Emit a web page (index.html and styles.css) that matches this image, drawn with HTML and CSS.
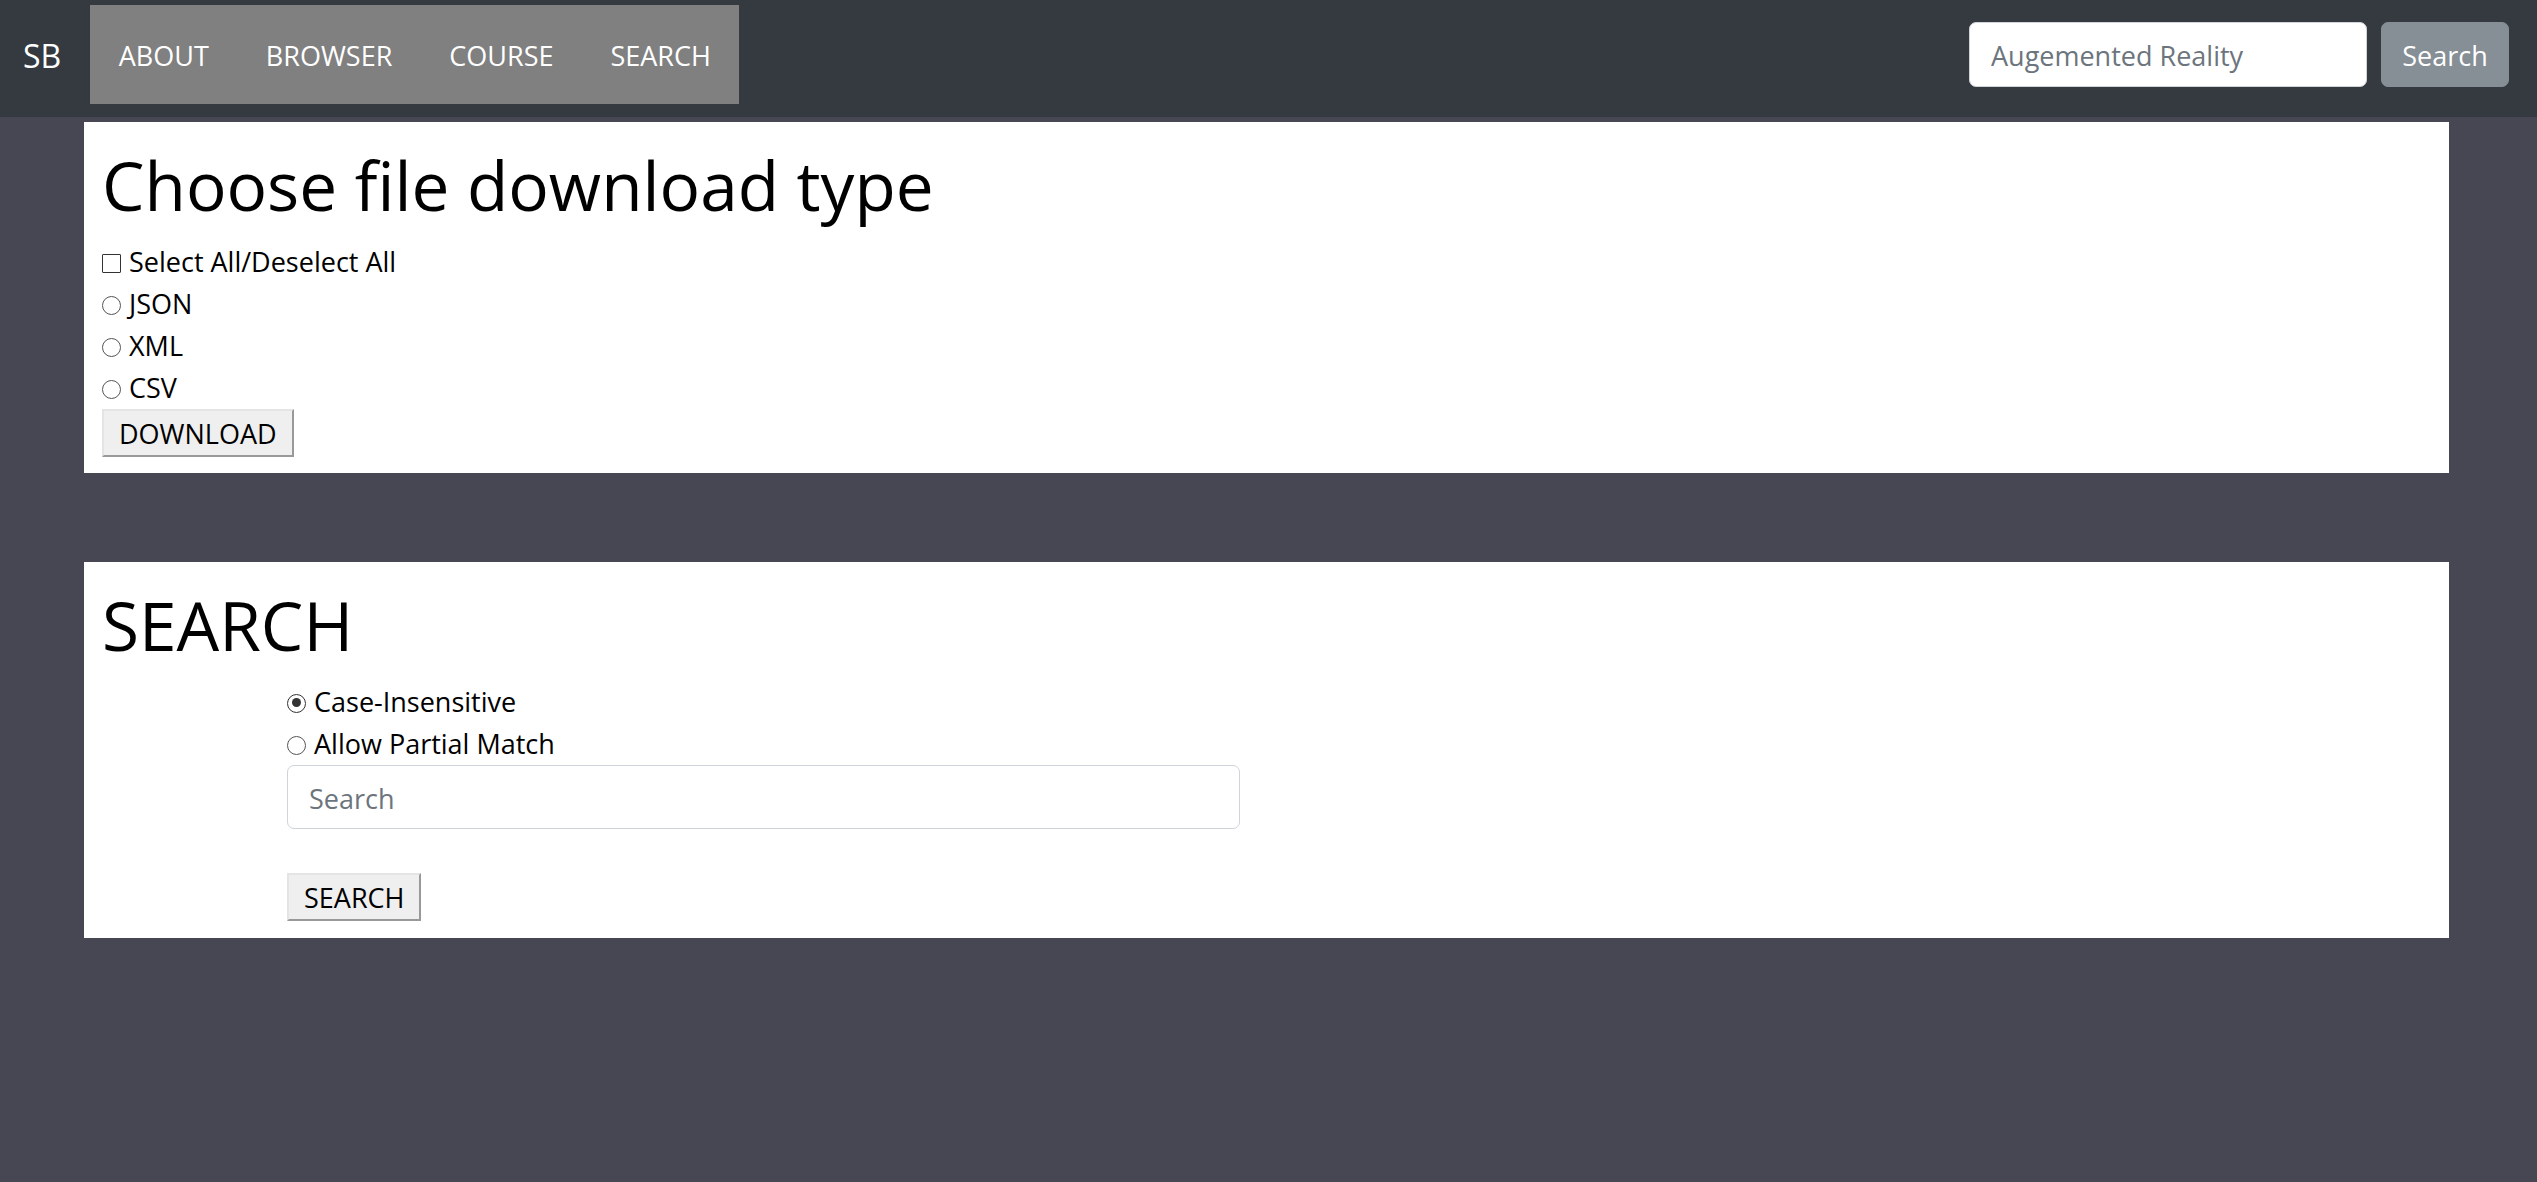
FILE: index.html
```html
<!DOCTYPE html>
<html lang="en">
<head>
<meta charset="utf-8">
<title>SB</title>
<link rel="stylesheet" href="styles.css">
</head>
<body>
<nav class="navbar">
  <a class="brand" href="#">SB</a>
  <ul class="nav-links">
    <li><a href="#">ABOUT</a></li>
    <li><a href="#">BROWSER</a></li>
    <li><a href="#">COURSE</a></li>
    <li><a href="#">SEARCH</a></li>
  </ul>
  <form class="nav-search">
    <input class="nav-input" type="text" placeholder="Augemented Reality">
    <button class="nav-btn" type="button">Search</button>
  </form>
</nav>
<main class="container">
  <section class="card">
    <h1>Choose file download type</h1>
    <label class="opt"><input type="checkbox" class="box"><span>Select All/Deselect All</span></label>
    <label class="opt"><input type="radio" name="ft" class="radio"><span>JSON</span></label>
    <label class="opt"><input type="radio" name="ft2" class="radio"><span>XML</span></label>
    <label class="opt"><input type="radio" name="ft3" class="radio"><span>CSV</span></label>
    <button class="classic-btn" type="button">DOWNLOAD</button>
  </section>
  <section class="card card-search">
    <h1>SEARCH</h1>
    <form class="search-form">
      <label class="opt"><input type="radio" class="radio" checked><span>Case-Insensitive</span></label>
      <label class="opt"><input type="radio" class="radio"><span>Allow Partial Match</span></label>
      <input class="search-input" type="text" placeholder="Search">
      <button class="classic-btn search-btn" type="button">SEARCH</button>
    </form>
  </section>
</main>
</body>
</html>
```
FILE: styles.css
```css
* { box-sizing: border-box; }
html, body { margin: 0; padding: 0; }
body {
  background: #474753;
  font-family: "Open Sans", "Noto Sans", sans-serif;
  font-size: 27px;
  line-height: 42px;
  color: #000;
  min-height: 1182px;
}
.navbar {
  display: flex;
  align-items: center;
  height: 117px;
  background: #343a40;
  padding: 5px 28px 13px 23px;
}
.brand {
  color: #fff;
  text-decoration: none;
  font-size: 32px;
  line-height: 42px;
  margin-right: 29px;
  padding-top: 2px;
}
.nav-links {
  display: flex;
  list-style: none;
  margin: 0;
  padding: 0;
  height: 99px;
  align-items: center;
  background: #808080;
}
.nav-links a {
  display: block;
  color: #fff;
  text-decoration: none;
  font-size: 27px;
  padding: 2px 28.5px 0;
  line-height: 97px;
}
.nav-search {
  margin-left: auto;
  display: flex;
  align-items: center;
  gap: 14px;
}
.nav-input {
  width: 398px;
  height: 65px;
  border: 1px solid #ced4da;
  border-radius: 7px;
  padding: 2px 21px 0;
  font: inherit;
  font-size: 27px;
  color: #495057;
  background: #fff;
}
.nav-input::placeholder, .search-input::placeholder { color: #6c757d; }
.nav-btn {
  width: 128px;
  height: 65px;
  border: 1px solid #868e96;
  border-radius: 7px;
  background: #868e96;
  color: #fff;
  font: inherit;
  font-size: 27px;
  padding: 2px 0 0;
}
.container {
  padding: 5px 88px 0 84px;
}
.card {
  background: #fff;
  padding: 21px 17px 16px 18px;
}
.card-search {
  margin-top: 89px;
  padding-bottom: 17px;
}
h1 {
  font-size: 67.5px;
  font-weight: 400;
  line-height: 84px;
  margin: 0 0 14px 0;
}
.opt {
  display: flex;
  align-items: center;
  height: 42px;
}
.opt span { margin-left: 8px; }
.box, .radio {
  appearance: none;
  -webkit-appearance: none;
  margin: 0;
  width: 19px;
  height: 19px;
  background: #fff;
  position: relative;
  top: 1px;
  flex: none;
}
.box { border: 1.5px solid #333; border-radius: 1px; }
.radio { border: 1.5px solid #555; border-radius: 50%; }
.radio:checked { border-color: #333; }
.radio:checked::after {
  content: "";
  position: absolute;
  left: 3.5px; top: 3.5px;
  width: 9px; height: 9px;
  border-radius: 50%;
  background: #333;
}
.classic-btn {
  display: block;
  height: 48px;
  background: #efefef;
  border: 2px solid;
  border-color: #e4e4e4 #999 #999 #e4e4e4;
  font: inherit;
  font-size: 27px;
  line-height: 42px;
  padding: 1px 15px 0;
  color: #000;
}
.search-form {
  margin-left: 185px;
  width: 953px;
}
.search-input {
  display: block;
  width: 953px;
  height: 64px;
  border: 1px solid #ced4da;
  border-radius: 7px;
  padding: 2px 21px 0;
  font: inherit;
  font-size: 27px;
}
.search-btn { margin-top: 44px; }
```
